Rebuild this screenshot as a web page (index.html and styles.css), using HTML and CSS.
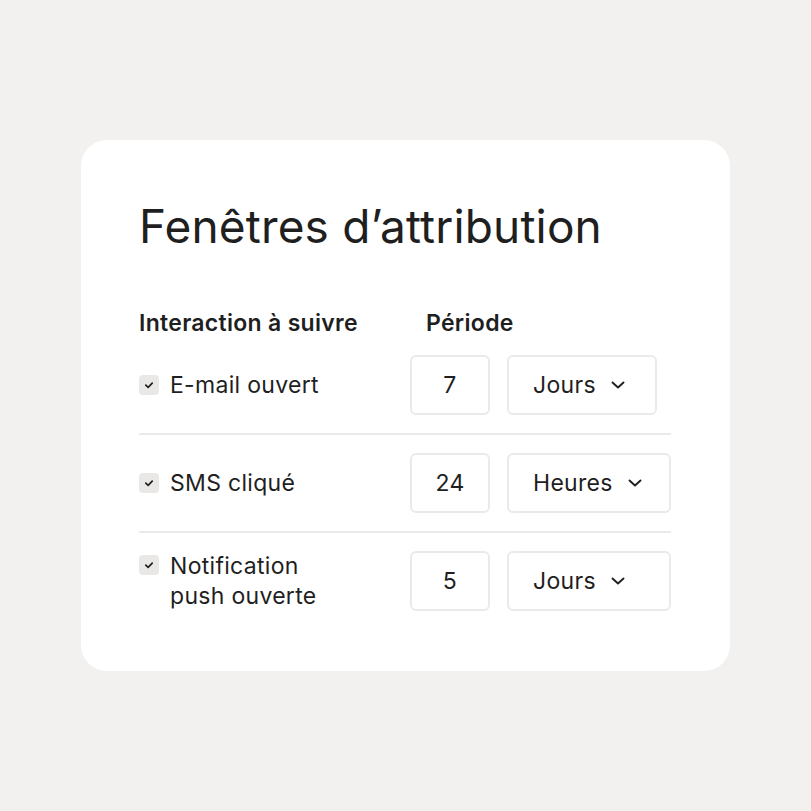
FILE: index.html
```html
<!DOCTYPE html>
<html lang="fr">
<head>
    <meta charset="UTF-8">
    <title>Fenêtres d'attribution</title>
    <link rel="stylesheet" href="styles.css">
</head>
<body>
    <div class="card">
        <h1>Fenêtres d’attribution</h1>
        <div class="head">
            <span>Interaction à suivre</span>
            <span class="period">Période</span>
        </div>
        <div class="row">
            <label class="item">
                <span class="check"><svg viewBox="0 0 10 10"><path d="M2.7 5.1 L4.4 6.7 L7.3 3.7"/></svg></span>
                <span>E-mail ouvert</span>
            </label>
            <div class="box num">7</div>
            <div class="box select short">Jours <svg class="chev" viewBox="0 0 14 8"><path d="M1.5 1.5 L7 6.5 L12.5 1.5"/></svg></div>
        </div>
        <div class="row">
            <label class="item">
                <span class="check"><svg viewBox="0 0 10 10"><path d="M2.7 5.1 L4.4 6.7 L7.3 3.7"/></svg></span>
                <span>SMS cliqué</span>
            </label>
            <div class="box num">24</div>
            <div class="box select">Heures <svg class="chev" viewBox="0 0 14 8"><path d="M1.5 1.5 L7 6.5 L12.5 1.5"/></svg></div>
        </div>
        <div class="row last">
            <label class="item top">
                <span class="check"><svg viewBox="0 0 10 10"><path d="M2.7 5.1 L4.4 6.7 L7.3 3.7"/></svg></span>
                <span>Notification<br>push ouverte</span>
            </label>
            <div class="box num">5</div>
            <div class="box select">Jours <svg class="chev" viewBox="0 0 14 8"><path d="M1.5 1.5 L7 6.5 L12.5 1.5"/></svg></div>
        </div>
    </div>
</body>
</html>
```

FILE: styles.css
```css
body {
    margin: 0;
    background: #f2f1ef;
    font-family: 'Inter', 'Liberation Sans', sans-serif;
    color: #1f1f1f;
    height: 811px;
    display: flex;
    align-items: flex-start;
    justify-content: center;
}
.card {
    margin-top: 140px;
    background: #fff;
    border-radius: 26px;
    width: 649px;
    box-sizing: border-box;
    padding: 56px 59px 60px 58px;
}
h1 {
    margin: 0 0 54px;
    font-size: 46px;
    font-weight: 400;
    line-height: 60px;
    letter-spacing: 0.15px;
}
.head {
    display: grid;
    grid-template-columns: 272px 1fr;
    font-size: 23px;
    font-weight: 600;
    line-height: 26px;
    letter-spacing: 0.3px;
    margin-bottom: 19px;
}
.head .period {
    padding-left: 15px;
}
.row {
    display: grid;
    grid-template-columns: 254px 80px auto;
    column-gap: 17px;
    align-items: center;
    padding: 0 0 18px;
    margin-bottom: 18px;
    border-bottom: 2px solid #ebeae8;
    font-size: 23px;
    letter-spacing: 0.3px;
}
.row.last {
    border-bottom: none;
    padding-bottom: 0;
    margin-bottom: 0;
}
.item {
    display: flex;
    align-items: center;
    gap: 11px;
    line-height: 30px;
}
.item.top {
    align-items: flex-start;
}
.item.top .check {
    margin-top: 4px;
}
.check {
    width: 20px;
    height: 20px;
    border-radius: 4px;
    background: #e9e8e6;
    display: flex;
    align-items: center;
    justify-content: center;
    flex-shrink: 0;
}
.check svg {
    width: 14px;
    height: 14px;
    fill: none;
    stroke: #1f1f1f;
    stroke-width: 1.2;
    stroke-linecap: round;
    stroke-linejoin: round;
}
.box {
    height: 60px;
    box-sizing: border-box;
    border: 2px solid #ebeae8;
    border-radius: 6px;
    display: flex;
    align-items: center;
}
.num {
    justify-content: center;
}
.select {
    width: 164px;
    padding-left: 24px;
    gap: 15px;
}
.select.short {
    width: 150px;
}
.chev {
    width: 14px;
    height: 8px;
    fill: none;
    stroke: #1f1f1f;
    stroke-width: 1.9;
    stroke-linecap: round;
    stroke-linejoin: round;
}
```
